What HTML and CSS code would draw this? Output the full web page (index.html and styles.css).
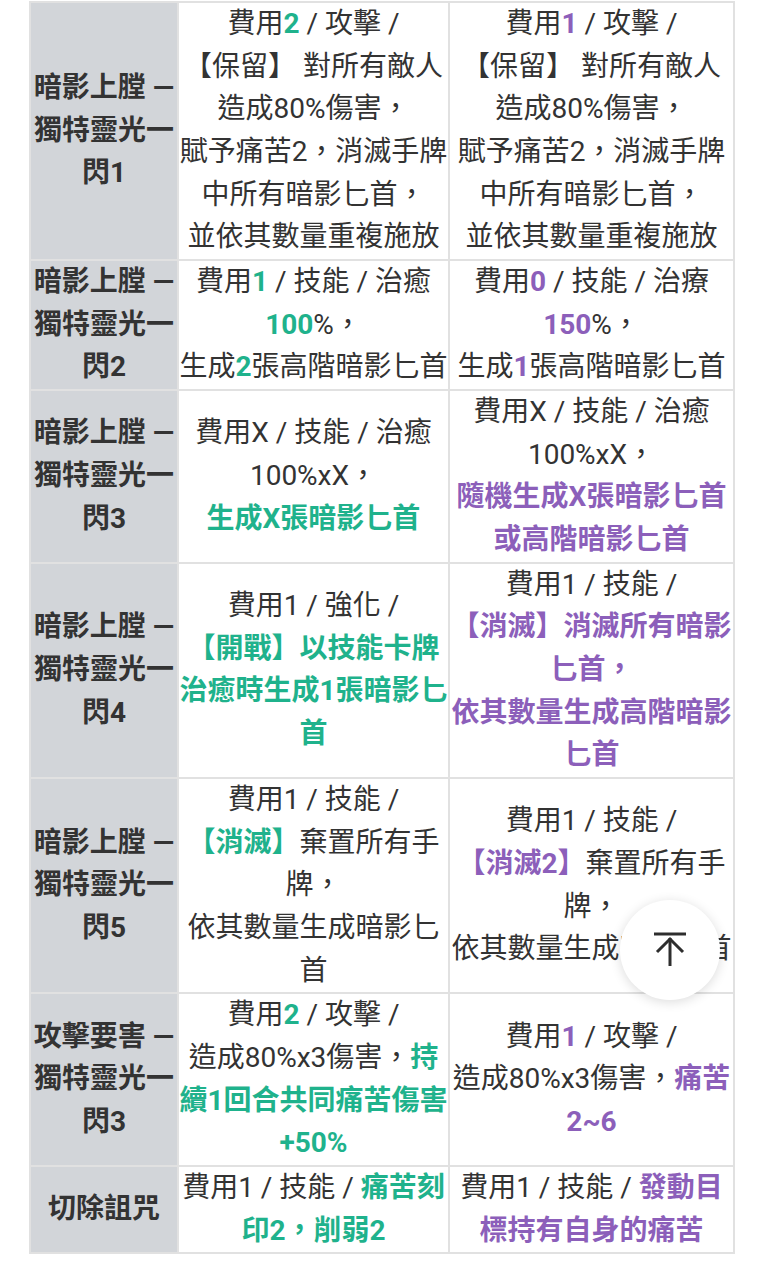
FILE: index.html
```html
<!DOCTYPE html>
<html lang="zh-Hant">
<head>
<meta charset="utf-8">
<title>卡牌比較</title>
<link rel="stylesheet" href="styles.css">
</head>
<body>
<div class="sheet">
  <div class="name">暗影上膛 —<br>獨特靈光一<br>閃1</div>
  <div class="cell"><div>費用<b class="g">2</b> / 攻擊 /<br>【保留】 對所有敵人<br>造成80%傷害，<br>賦予痛苦2，消滅手牌<br>中所有暗影匕首，<br>並依其數量重複施放</div></div>
  <div class="cell"><div>費用<b class="p">1</b> / 攻擊 /<br>【保留】 對所有敵人<br>造成80%傷害，<br>賦予痛苦2，消滅手牌<br>中所有暗影匕首，<br>並依其數量重複施放</div></div>

  <div class="name">暗影上膛 —<br>獨特靈光一<br>閃2</div>
  <div class="cell"><div>費用<b class="g">1</b> / 技能 / 治癒<br><b class="g">100</b>%，<br>生成<b class="g">2</b>張高階暗影匕首</div></div>
  <div class="cell"><div>費用<b class="p">0</b> / 技能 / 治療<br><b class="p">150</b>%，<br>生成<b class="p">1</b>張高階暗影匕首</div></div>

  <div class="name">暗影上膛 —<br>獨特靈光一<br>閃3</div>
  <div class="cell"><div>費用X / 技能 / 治癒<br>100%xX，<br><b class="g">生成X張暗影匕首</b></div></div>
  <div class="cell"><div>費用X / 技能 / 治癒<br>100%xX，<br><b class="p">隨機生成X張暗影匕首<br>或高階暗影匕首</b></div></div>

  <div class="name">暗影上膛 —<br>獨特靈光一<br>閃4</div>
  <div class="cell"><div>費用1 / 強化 /<br><b class="g">【開戰】以技能卡牌<br>治癒時生成1張暗影匕<br>首</b></div></div>
  <div class="cell"><div>費用1 / 技能 /<br><b class="p">【消滅】消滅所有暗影<br>匕首，<br>依其數量生成高階暗影<br>匕首</b></div></div>

  <div class="name">暗影上膛 —<br>獨特靈光一<br>閃5</div>
  <div class="cell"><div>費用1 / 技能 /<br><b class="g">【消滅】</b>棄置所有手<br>牌，<br>依其數量生成暗影匕<br>首</div></div>
  <div class="cell"><div>費用1 / 技能 /<br><b class="p">【消滅2】</b>棄置所有手<br>牌，<br>依其數量生成暗影匕首</div></div>

  <div class="name">攻擊要害 —<br>獨特靈光一<br>閃3</div>
  <div class="cell"><div>費用<b class="g">2</b> / 攻擊 /<br>造成80%x3傷害，<b class="g">持<br>續1回合共同痛苦傷害<br>+50%</b></div></div>
  <div class="cell"><div>費用<b class="p">1</b> / 攻擊 /<br>造成80%x3傷害，<b class="p">痛苦<br>2~6</b></div></div>

  <div class="name">切除詛咒</div>
  <div class="cell"><div>費用1 / 技能 / <b class="g">痛苦刻<br>印2，削弱2</b></div></div>
  <div class="cell"><div>費用1 / 技能 / <b class="p">發動目<br>標持有自身的痛苦</b></div></div>
</div>

<button class="to-top" type="button" aria-label="回到頂部">
  <svg width="40" height="40" viewBox="0 0 40 40" fill="none" stroke="#2e2e2e" stroke-width="3" stroke-linecap="butt" stroke-linejoin="miter">
    <line x1="4" y1="5" x2="36" y2="5"/>
    <line x1="20" y1="9" x2="20" y2="37"/>
    <polyline points="7,23 20,10 33,23"/>
  </svg>
</button>
</body>
</html>
```

FILE: styles.css
```css
html, body {
  margin: 0;
  padding: 0;
  background: #ffffff;
}

body {
  font-family: Roboto, "Noto Sans CJK TC", "Noto Sans", sans-serif;
  font-size: 28px;
  line-height: 42.67px;
  color: #333333;
}

.sheet {
  display: grid;
  grid-template-columns: 146px 269px 283px;
  gap: 2px;
  padding: 2px;
  width: 702px;
  margin: 1px 0 0 29px;
  background: #e1e1e1;
}

.name,
.cell {
  display: flex;
  align-items: center;
  justify-content: center;
  text-align: center;
  white-space: nowrap;
}

.name {
  background: #d2d5d9;
  font-weight: 700;
  color: #333333;
}

.cell {
  background: #ffffff;
}

.g {
  color: #1fb28c;
  font-weight: 700;
}

.p {
  color: #8c5fba;
  font-weight: 700;
}

.to-top {
  position: fixed;
  left: 620px;
  top: 900px;
  width: 100px;
  height: 100px;
  border: none;
  border-radius: 50%;
  background: #ffffff;
  box-shadow: 0 2px 12px rgba(0, 0, 0, 0.14);
  display: flex;
  align-items: center;
  justify-content: center;
  padding: 0;
}

.to-top svg {
  display: block;
  margin-top: -2px;
}
```
